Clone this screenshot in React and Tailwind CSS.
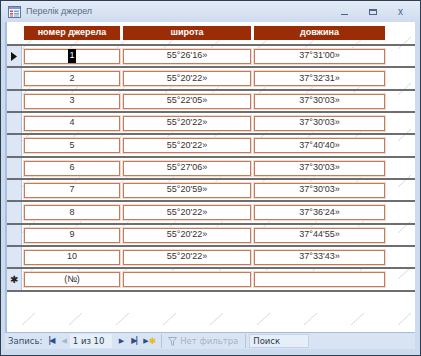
import React from "react";

const rows = [
  ["1", "55°26'16»", "37°31'00»"],
  ["2", "55°20'22»", "37°32'31»"],
  ["3", "55°22'05»", "37°30'03»"],
  ["4", "55°20'22»", "37°30'03»"],
  ["5", "55°20'22»", "37°40'40»"],
  ["6", "55°27'06»", "37°30'03»"],
  ["7", "55°20'59»", "37°30'03»"],
  ["8", "55°20'22»", "37°36'24»"],
  ["9", "55°20'22»", "37°44'55»"],
  ["10", "55°20'22»", "37°33'43»"],
];

// row pitch in the picture is ~22.3px, so mix 22 and 23
const heights = [
  "h-[22px]",
  "h-[23px]",
  "h-[22px]",
  "h-[22px]",
  "h-[23px]",
  "h-[22px]",
  "h-[22px]",
  "h-[23px]",
  "h-[22px]",
  "h-[22px]",
  "h-[23px]",
];

const box =
  "h-[15px] bg-white border border-[#c47a5c] shadow-[0_0_0_1px_#f0d9cd] flex items-center justify-center text-[9px] text-[#333]";

const Field = ({ w, children }) => (
  <div className={`${w} ${box}`}>{children}</div>
);

const Row = ({ h, marker, cells }) => (
  <div className={`${h} flex items-center border-b-2 border-[#6e6e6e]`}>
    <div className="w-[15px] h-full bg-[#dce6f4] border-r border-[#b3c5de] flex items-center justify-center shrink-0">
      {marker}
    </div>
    <div className="flex items-center ml-[2px] gap-[3px]">
      <Field w="w-[96px]">{cells[0]}</Field>
      <Field w="w-[128px]">{cells[1]}</Field>
      <Field w="w-[131px]">{cells[2]}</Field>
    </div>
  </div>
);

const Backdrop = () => (
  <svg className="absolute inset-0 w-full h-full pointer-events-none" aria-hidden="true">
    <defs>
      <pattern id="diag" width="47" height="46" patternUnits="userSpaceOnUse" x="12" y="10">
        <line x1="3" y1="17" x2="16" y2="5" stroke="#d9d9d9" strokeWidth="1" />
      </pattern>
    </defs>
    <rect width="100%" height="100%" fill="url(#diag)" />
  </svg>
);

const FormIcon = () => (
  <svg width="13" height="12" viewBox="0 0 13 12">
    <rect x="0.5" y="0.5" width="12" height="11" fill="#f4f7fb" stroke="#5b78a8" />
    <rect x="1" y="1" width="11" height="2" fill="#7d9bcb" />
    <rect x="2" y="4.5" width="3" height="1.5" fill="#c0504d" />
    <rect x="6" y="4.5" width="5" height="1.5" fill="#7d9bcb" />
    <rect x="2" y="7" width="3" height="1.5" fill="#c0504d" />
    <rect x="6" y="7" width="5" height="1.5" fill="#7d9bcb" />
    <rect x="2" y="9.5" width="3" height="1" fill="#c0504d" />
    <rect x="6" y="9.5" width="5" height="1" fill="#7d9bcb" />
  </svg>
);

export default function App() {
  return (
    <div className="w-[421px] h-[356px] border border-[#2f3d52] bg-[#cddbee] flex flex-col font-['Liberation_Sans',Arial,sans-serif] overflow-hidden">
      {/* title bar */}
      <div className="h-[21px] flex items-center pl-[7px] pr-[17px] bg-gradient-to-b from-[#e3ecf7] to-[#cfdcef] shrink-0">
        <FormIcon />
        <span className="ml-[5px] text-[9px] text-[#5a6c88]">Перелік джерел</span>
        <div className="ml-auto flex items-center gap-[21px] text-[#4f6486]">
          <div className="w-[7px] h-[1.5px] bg-[#4f6486] mt-[6px]" />
          <div className="w-[8px] h-[6px] border border-[#4f6486] border-t-2" />
          <span className="text-[10px] leading-none">x</span>
        </div>
      </div>

      {/* datasheet area */}
      <div className="relative flex-1 ml-[4px] mr-[5px] bg-white border-l-2 border-[#a9bfdf]">
        <Backdrop />
        <div className="relative">
          <div className="h-[24px] flex items-start pt-[4px] border-b-2 border-[#6e6e6e]">
            <div className="w-[15px] shrink-0" />
            <div className="flex ml-[2px] gap-[3px] text-[9px] font-bold text-white">
              <div className="w-[96px] h-[14px] bg-[#9a2d06] flex items-center justify-center">номер джерела</div>
              <div className="w-[128px] h-[14px] bg-[#9a2d06] flex items-center justify-center">широта</div>
              <div className="w-[131px] h-[14px] bg-[#9a2d06] flex items-center justify-center">довжина</div>
            </div>
          </div>
          {rows.map((r, i) => (
            <Row
              key={r[0]}
              h={heights[i]}
              marker={
                i === 0 ? (
                  <svg width="6" height="9" viewBox="0 0 6 9">
                    <path d="M0 0 L6 4.5 L0 9 Z" fill="#111" />
                  </svg>
                ) : null
              }
              cells={[
                i === 0 ? <span className="bg-black text-white px-[1px]">1</span> : r[0],
                r[1],
                r[2],
              ]}
            />
          ))}
          <Row
            h={heights[10]}
            marker={<span className="text-[10px] text-[#222] leading-none">✱</span>}
            cells={["(№)", "", ""]}
          />
        </div>
      </div>

      {/* record navigator */}
      <div className="h-[17px] ml-[4px] mr-[5px] flex items-center bg-[#d8e4f3] border-t border-[#a7bcda] text-[8.5px] text-[#3c4d69] font-['DejaVu_Sans',sans-serif] shrink-0">
        <span className="ml-[3px]">Запись:</span>
        <span className="ml-[6px] text-[#2d4d86] text-[8px] font-bold tracking-[-2px]">|◀</span>
        <span className="ml-[8px] text-[#a9b5c7] text-[7px]">◀</span>
        <div className="ml-[3px] w-[42px] h-[14px] bg-[#e6eef8] flex items-center pl-[3px] text-[#2d3a50]">1 из 10</div>
        <span className="ml-[7px] text-[#2d4d86] text-[7px]">▶</span>
        <span className="ml-[7px] text-[#2d4d86] text-[8px] font-bold tracking-[-2px]">▶|</span>
        <span className="ml-[7px] text-[#2d4d86] text-[7px]">▶</span>
        <span className="text-[#e8b923] text-[9px] leading-none">✱</span>
        <div className="ml-[5px] h-[14px] border-l border-[#b3c4dc]" />
        <svg className="ml-[6px]" width="9" height="9" viewBox="0 0 9 9">
          <path d="M0.5 0.5 H8.5 L5.5 4 V8.5 L3.5 7.5 V4 Z" fill="none" stroke="#a3afc0" />
        </svg>
        <span className="ml-[3px] text-[#a8b3c4]">Нет фильтра</span>
        <div className="ml-[7px] h-[14px] border-l border-[#b3c4dc]" />
        <div className="ml-[3px] w-[60px] h-[14px] bg-[#e6eef8] border border-[#c3d2e6] flex items-center pl-[3px] text-[#2d3a50]">Поиск</div>
      </div>
      <div className="h-[6px] shrink-0" />
    </div>
  );
}
